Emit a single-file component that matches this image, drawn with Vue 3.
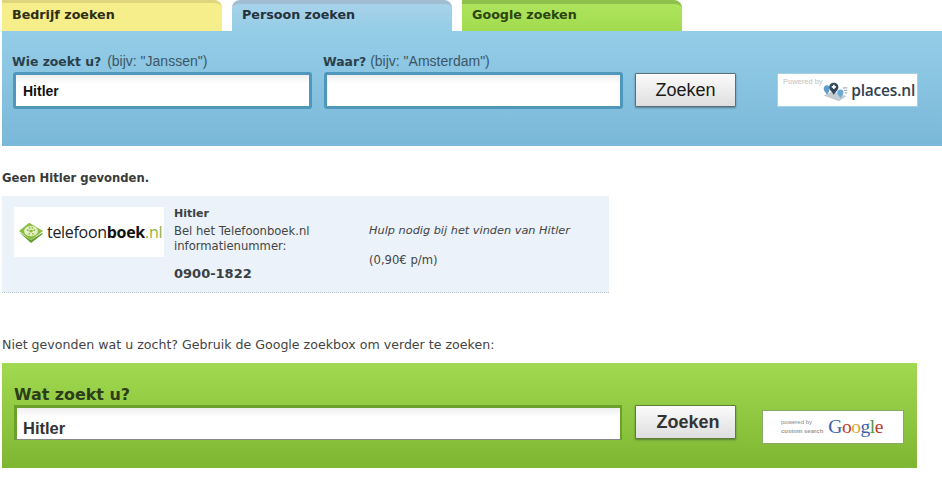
<template>
  <div class="page">
    <!-- tabs -->
    <div class="tabs">
      <div v-for="tab in tabs" :key="tab.label" class="tab" :class="tab.cls">{{ tab.label }}</div>
    </div>

    <!-- persoon zoeken -->
    <div class="panel-blue">
      <div class="field first">
        <div class="label"><b>Wie zoekt u?</b> (bijv: "Janssen")</div>
        <div class="input">Hitler</div>
      </div>
      <div class="field second">
        <div class="label"><b>Waar?</b> (bijv: "Amsterdam")</div>
        <div class="input"></div>
      </div>
      <button class="btn">Zoeken</button>
      <div class="places">
        <span class="powered">Powered by</span>
        <svg class="pin-icon" width="27" height="22" viewBox="0 0 32 26">
          <path d="M2 17l11-5 16 6-9 6z" fill="#c3cbd3" />
          <path d="M25 8h5M26 11h4M27 14h3" stroke="#a9b4bf" stroke-width="1.500" />
          <path d="M6 5c-2.500 0-4 2-4 4 0 3 3 5 4 7 1-2 3-4 3-7 0-2-1-4-3-4z" fill="#5d9ccb" />
          <path d="M22 10c-2.500 0-4 1.500-4 3.500 0 2.500 3 4 4 7 1-3 3.500-4.500 3.500-7 0-2-1.500-3.500-3.500-3.500z" fill="#6aa9d6" />
          <path d="M14 2c-3.300 0-5.500 2.300-5.500 5.200 0 3.600 3.700 5.800 5.500 9.300 1.800-3.500 5.500-5.700 5.500-9.300C19.500 4.300 17.300 2 14 2z" fill="#33485c" />
          <path d="M14 4.500v5M11.500 7h5" stroke="#fff" stroke-width="2" />
        </svg>
        <span class="places-name">places.nl</span>
      </div>
    </div>

    <p class="none-found">Geen Hitler gevonden.</p>

    <!-- telefoonboek -->
    <div class="card">
      <div class="logo">
        <svg class="book" width="26" height="24" viewBox="0 0 28 26">
          <path d="M1 13L14 25l13-10-1-1-12 8z" fill="#5f9a2c" />
          <path d="M1 12L12 3l15 9-13 10z" fill="#8dbd3f" />
          <ellipse cx="14" cy="12" rx="7.500" ry="5.500" fill="#e4efc8" />
          <ellipse cx="14" cy="12" rx="2" ry="1.500" fill="#8dbd3f" />
          <circle cx="10.500" cy="11" r="1" fill="#8dbd3f" />
          <circle cx="17.500" cy="11" r="1" fill="#8dbd3f" />
          <circle cx="12.500" cy="8.500" r="1" fill="#8dbd3f" />
          <circle cx="15.500" cy="8.500" r="1" fill="#8dbd3f" />
          <circle cx="12" cy="15" r="1" fill="#8dbd3f" />
          <circle cx="16" cy="15" r="1" fill="#8dbd3f" />
        </svg>
        <span class="logo-text">telefoon<b>boek</b><i>.nl</i></span>
      </div>
      <div class="info">
        <div class="name">Hitler</div>
        <div class="bel">Bel het Telefoonboek.nl<br />informatienummer:</div>
        <div class="phone">0900-1822</div>
      </div>
      <div class="help">
        <em>Hulp nodig bij het vinden van Hitler</em>
        <span class="price">(0,90€ p/m)</span>
      </div>
    </div>

    <p class="hint">Niet gevonden wat u zocht? Gebruik de Google zoekbox om verder te zoeken:</p>

    <!-- google zoeken -->
    <div class="panel-green">
      <div class="g-field">
        <div class="g-label">Wat zoekt u?</div>
        <div class="g-input">Hitler</div>
      </div>
      <button class="btn g-btn">Zoeken</button>
      <div class="google">
        <span class="g-powered">powered by<br /><b>custom search</b></span>
        <span class="g-logo"><span class="c1">G</span><span class="c2">o</span><span class="c3">o</span><span class="c1">g</span><span class="c4">l</span><span class="c2">e</span></span>
      </div>
    </div>
  </div>
</template>

<script setup>
const tabs = [
  { label: "Bedrijf zoeken", cls: "yellow" },
  { label: "Persoon zoeken", cls: "blue" },
  { label: "Google zoeken", cls: "green" },
];
</script>

<style>
body {
  margin: 0;
  background: #fff;
}
</style>

<style scoped>
.page {
  width: 940px;
  height: 477px;
  padding-left: 2px;
  overflow: hidden;
  font-family: "DejaVu Sans", Verdana, sans-serif;
  color: #333;
}

/* Tabs */
.tabs {
  display: flex;
  gap: 10px;
  height: 31px;
}
.tab {
  width: 210px;
  padding-left: 10px;
  border-radius: 0 8px 0 0;
  font-size: 12.700px;
  font-weight: bold;
  line-height: 20px;
  color: #2d2d12;
}
.tab.yellow {
  background: #f5ee8b;
  border-top: 3px solid #dfd57c;
  height: 26px;
  padding-top: 2px;
}
.tab.blue {
  background: linear-gradient(#a7d3ea, #94cce6);
  border-top: 4px solid #a1bdd1;
  height: 26px;
  padding-top: 1px;
  border-radius: 8px 8px 0 0;
  color: #25323a;
}
.tab.green {
  background: linear-gradient(#aee45c, #a1db4f);
  border-top: 4px solid #8fc04c;
  height: 26px;
  padding-top: 1px;
  color: #2c4410;
}

/* Blue panel */
.panel-blue {
  display: flex;
  height: 115px;
  box-sizing: border-box;
  padding: 22px 0 0 11px;
  background: linear-gradient(#94cde7, #7ab8d9);
}
.field {
  width: 299px;
}
.second {
  margin-left: 12px;
}
.label {
  margin-left: -1px;
  height: 19px;
  font-family: "Liberation Sans", Arial, sans-serif;
  font-size: 14px;
  line-height: 16px;
  color: #3c5666;
  white-space: nowrap;
}
.label b {
  font-family: "DejaVu Sans", Verdana, sans-serif;
  font-size: 12.400px;
  color: #2b3f4b;
}
.first .label b {
  margin-right: 2px;
}
.input {
  box-sizing: border-box;
  height: 37px;
  border: 3px solid #4f97bb;
  border-radius: 3px;
  padding-left: 7px;
  background: linear-gradient(#eeeeee, #fff 9px);
  font-family: "Liberation Sans", Arial, sans-serif;
  font-size: 14px;
  font-weight: bold;
  line-height: 33px;
  color: #111;
}
.btn {
  width: 101px;
  height: 34px;
  margin: 20px 0 0 12px;
  padding: 0;
  border: 1px solid #5c6f78;
  border-radius: 1px;
  background: linear-gradient(#fbfbfb, #dedede);
  box-shadow: 0 1px 2px rgba(40, 60, 70, 0.5);
  font-family: "Liberation Sans", Arial, sans-serif;
  font-size: 18px;
  color: #1a1a1a;
}
.places {
  position: relative;
  box-sizing: border-box;
  width: 141px;
  height: 34px;
  margin: 20px 0 0 41px;
  background: #fff;
  border: 1px solid #a9cfe2;
  display: flex;
  align-items: center;
  justify-content: flex-end;
  padding-right: 2px;
}
.powered {
  position: absolute;
  left: 5px;
  top: 3px;
  font-family: "Liberation Sans", Arial, sans-serif;
  font-size: 7.500px;
  color: #c2c2c2;
}
.pin-icon {
  margin-top: 3px;
}
.places-name {
  font-family: "Open Sans", sans-serif;
  font-size: 15.500px;
  font-weight: 600;
  letter-spacing: -0.200px;
  color: #2f4252;
  margin-left: 2px;
}

/* Results */
.none-found {
  margin: 25px 0 0;
  height: 25px;
  font-size: 11.600px;
  line-height: 14px;
  font-weight: bold;
  color: #3a3a3a;
}
.card {
  display: flex;
  width: 607px;
  height: 97px;
  box-sizing: border-box;
  padding: 11px 0 0 12px;
  background: #ebf2f9;
  border-bottom: 1px dotted #c0c8cf;
}
.logo {
  display: flex;
  align-items: center;
  width: 150px;
  height: 50px;
  box-sizing: border-box;
  padding-left: 4px;
  background: #fff;
}
.book {
  flex-shrink: 0;
}
.logo-text {
  margin-left: 3px;
  font-family: "Open Sans", sans-serif;
  font-size: 16px;
  letter-spacing: -0.300px;
  color: #222;
  white-space: nowrap;
}
.logo-text b {
  color: #111;
}
.logo-text i {
  font-style: normal;
  color: #8cb43f;
}
.info {
  width: 195px;
  margin-left: 10px;
  font-size: 11.600px;
  line-height: 15px;
}
.name {
  margin-top: -1px;
  height: 18px;
  font-weight: bold;
  font-size: 11px;
  color: #3a4045;
}
.bel {
  height: 30px;
  color: #444;
}
.phone {
  margin-top: 11px;
  font-size: 13px;
  font-weight: bold;
  line-height: 17px;
  color: #3a3f44;
}
.help {
  display: flex;
  flex-direction: column;
  padding-top: 17px;
  font-size: 11.300px;
  line-height: 14px;
  color: #444;
}
.price {
  margin-top: 15px;
  font-size: 11.600px;
}
.hint {
  margin: 45px 0 0;
  height: 25px;
  font-size: 12.600px;
  line-height: 14px;
  color: #444;
}

/* Green panel */
.panel-green {
  display: flex;
  width: 915px;
  height: 105px;
  box-sizing: border-box;
  padding: 21px 0 0 12px;
  background: linear-gradient(#a1da50, #7eb632);
}
.g-field {
  width: 608px;
}
.g-label {
  height: 21px;
  padding-top: 1px;
  margin-bottom: -1px;
  font-size: 15.900px;
  font-weight: bold;
  line-height: 20px;
  color: #2c3d18;
}
.g-input {
  box-sizing: border-box;
  height: 35px;
  border: 3px solid #6c9f2c;
  border-bottom: 1px solid #888;
  border-right-width: 2px;
  padding-left: 6px;
  background: linear-gradient(#eeeeee, #fff 9px);
  font-family: "Liberation Sans", Arial, sans-serif;
  font-size: 16.500px;
  font-weight: bold;
  line-height: 41px;
  color: #333;
}
.btn.g-btn {
  margin: 21px 0 0 13px;
  padding-left: 5px;
  font-weight: bold;
  color: #333;
  border-color: #5d7d33;
}
.google {
  box-sizing: border-box;
  display: flex;
  align-items: center;
  width: 142px;
  height: 34px;
  margin: 26px 0 0 26px;
  padding-left: 18px;
  background: #fff;
  border: 1px solid #8aa869;
}
.g-powered {
  font-family: "Liberation Sans", Arial, sans-serif;
  font-size: 6px;
  line-height: 9px;
  color: #888;
  white-space: nowrap;
}
.g-powered b {
  color: #9a9a9a;
}
.g-logo {
  margin-left: 5px;
  font-family: "Liberation Serif", serif;
  font-size: 19.500px;
  letter-spacing: -0.500px;
}
.c1 { color: #3e5fae; }
.c2 { color: #c0392b; }
.c3 { color: #d9a82a; }
.c4 { color: #4f9a45; }
</style>
